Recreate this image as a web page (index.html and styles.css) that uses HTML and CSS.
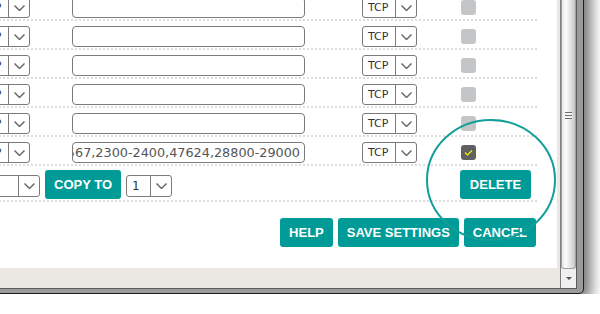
FILE: index.html
```html
<!DOCTYPE html>
<html lang="en">
<head>
    <meta charset="UTF-8">
    <meta name="viewport" content="width=device-width, initial-scale=1.0">
    <title>Port Forwarding</title>
    <link rel="stylesheet" href="styles.css">
</head>
<body>
    <div class="window">
        <div class="client">
            <div class="viewport">
                <div class="panel">
                    <div class="rule-list">
                        <div class="rule-row">
                            <div class="select sel-port"><span class="sel-value">TCP</span><span class="sel-arrow"><svg width="11" height="6" viewBox="0 0 11 6"><polyline points="0.5,0.5 5.5,5.5 10.5,0.5"/></svg></span></div>
                            <div class="text-field"></div>
                            <div class="select sel-proto"><span class="sel-value">TCP</span><span class="sel-arrow"><svg width="11" height="6" viewBox="0 0 11 6"><polyline points="0.5,0.5 5.5,5.5 10.5,0.5"/></svg></span></div>
                            <span class="check"></span>
                        </div>
                        <div class="rule-row">
                            <div class="select sel-port"><span class="sel-value">TCP</span><span class="sel-arrow"><svg width="11" height="6" viewBox="0 0 11 6"><polyline points="0.5,0.5 5.5,5.5 10.5,0.5"/></svg></span></div>
                            <div class="text-field"></div>
                            <div class="select sel-proto"><span class="sel-value">TCP</span><span class="sel-arrow"><svg width="11" height="6" viewBox="0 0 11 6"><polyline points="0.5,0.5 5.5,5.5 10.5,0.5"/></svg></span></div>
                            <span class="check"></span>
                        </div>
                        <div class="rule-row">
                            <div class="select sel-port"><span class="sel-value">TCP</span><span class="sel-arrow"><svg width="11" height="6" viewBox="0 0 11 6"><polyline points="0.5,0.5 5.5,5.5 10.5,0.5"/></svg></span></div>
                            <div class="text-field"></div>
                            <div class="select sel-proto"><span class="sel-value">TCP</span><span class="sel-arrow"><svg width="11" height="6" viewBox="0 0 11 6"><polyline points="0.5,0.5 5.5,5.5 10.5,0.5"/></svg></span></div>
                            <span class="check"></span>
                        </div>
                        <div class="rule-row">
                            <div class="select sel-port"><span class="sel-value">TCP</span><span class="sel-arrow"><svg width="11" height="6" viewBox="0 0 11 6"><polyline points="0.5,0.5 5.5,5.5 10.5,0.5"/></svg></span></div>
                            <div class="text-field"></div>
                            <div class="select sel-proto"><span class="sel-value">TCP</span><span class="sel-arrow"><svg width="11" height="6" viewBox="0 0 11 6"><polyline points="0.5,0.5 5.5,5.5 10.5,0.5"/></svg></span></div>
                            <span class="check"></span>
                        </div>
                        <div class="rule-row">
                            <div class="select sel-port"><span class="sel-value">TCP</span><span class="sel-arrow"><svg width="11" height="6" viewBox="0 0 11 6"><polyline points="0.5,0.5 5.5,5.5 10.5,0.5"/></svg></span></div>
                            <div class="text-field"></div>
                            <div class="select sel-proto"><span class="sel-value">TCP</span><span class="sel-arrow"><svg width="11" height="6" viewBox="0 0 11 6"><polyline points="0.5,0.5 5.5,5.5 10.5,0.5"/></svg></span></div>
                            <span class="check"></span>
                        </div>
                        <div class="rule-row">
                            <div class="select sel-port"><span class="sel-value">TCP</span><span class="sel-arrow"><svg width="11" height="6" viewBox="0 0 11 6"><polyline points="0.5,0.5 5.5,5.5 10.5,0.5"/></svg></span></div>
                            <div class="text-field"><span>4500-4567,2300-2400,47624,28800-29000</span></div>
                            <div class="select sel-proto"><span class="sel-value">TCP</span><span class="sel-arrow"><svg width="11" height="6" viewBox="0 0 11 6"><polyline points="0.5,0.5 5.5,5.5 10.5,0.5"/></svg></span></div>
                            <span class="check checked"><svg width="15" height="15" viewBox="0 0 15 15"><polyline points="4,7.5 6.5,10 11,5.5"/></svg></span>
                        </div>
                        <div class="copy-row">
                            <div class="select sel-from"><span class="sel-value"></span><span class="sel-arrow"><svg width="11" height="6" viewBox="0 0 11 6"><polyline points="0.5,0.5 5.5,5.5 10.5,0.5"/></svg></span></div>
                            <button class="btn btn-copy">COPY TO</button>
                            <div class="select sel-to"><span class="sel-value">1</span><span class="sel-arrow"><svg width="11" height="6" viewBox="0 0 11 6"><polyline points="0.5,0.5 5.5,5.5 10.5,0.5"/></svg></span></div>
                            <button class="btn btn-delete">DELETE</button>
                        </div>
                    </div>
                    <div class="actions">
                        <button class="btn">HELP</button>
                        <button class="btn">SAVE SETTINGS</button>
                        <button class="btn">CANCEL</button>
                    </div>
                </div>
                <div class="footer"></div>
            </div>
            <div class="scrollbar">
                <div class="thumb"><span class="grip"></span></div>
                <div class="arrow-down"></div>
            </div>
        </div>
    </div>

    <svg class="ring" width="600" height="314" viewBox="0 0 600 314">
        <ellipse cx="491" cy="180" rx="64" ry="60"/>
    </svg>
</body>
</html>
```

FILE: styles.css
```css
body {
    margin: 0;
    background: #fff;
    font-family: "DejaVu Sans", sans-serif;
    overflow: hidden;
}

.window {
    box-sizing: border-box;
    width: 614px;
    height: 314px;
    margin: -20px 0 0 -30px;
    padding: 0 6px 4px 0;
    background: #9b9b9b;
    border: 1px solid #1e1e1e;
    border-bottom-right-radius: 5px;
    box-shadow: 4px 4px 14px 3px rgba(0, 0, 0, 0.55);
}

.client {
    display: flex;
    height: 100%;
    background: #ebe8e4;
    border-right: 1px solid #5c5c5c;
    border-bottom: 1px solid #5c5c5c;
    box-sizing: border-box;
}

.viewport {
    flex: 1;
    display: flex;
    flex-direction: column;
}

.panel {
    flex: 1;
    background: #fff;
    margin-right: 3px;
    padding-top: 11px;
    padding-left: 4px;
}

.footer {
    height: 20px;
}

.rule-list {
    width: 562px;
}

.rule-row {
    display: flex;
    align-items: flex-start;
    height: 29px;
    padding-top: 5px;
    box-sizing: border-box;
    border-bottom: 2px dotted #dcdcdc;
}

.select {
    box-sizing: border-box;
    display: flex;
    height: 21px;
    border: 1px solid #7b7b7b;
    border-radius: 3px;
    background: #fff;
    color: #333;
}

.sel-value {
    flex: 1;
    padding-left: 5px;
    font-size: 11px;
    line-height: 19px;
    white-space: nowrap;
    overflow: hidden;
}

.sel-arrow {
    width: 20px;
    border-left: 1px solid #7b7b7b;
    display: flex;
    align-items: center;
    justify-content: center;
}

.sel-arrow svg polyline {
    fill: none;
    stroke: #6a6a6a;
    stroke-width: 1.5;
}

.sel-port,
.sel-proto {
    width: 55px;
}

.sel-proto {
    margin-left: 57px;
}

.text-field {
    box-sizing: border-box;
    width: 233px;
    height: 21px;
    margin-left: 42px;
    padding: 0 4px;
    border: 1px solid #7b7b7b;
    border-radius: 4px;
    display: flex;
    justify-content: flex-end;
    overflow: hidden;
    white-space: nowrap;
    font-size: 12.8px;
    line-height: 19px;
    color: #555;
}

.check {
    width: 15px;
    height: 15px;
    margin: 3px 0 0 44px;
    border-radius: 3px;
    background: #c3c5c7;
}

.check.checked {
    background: #606060;
}

.check svg polyline {
    fill: none;
    stroke: #ffee00;
    stroke-width: 1.2;
}

.copy-row {
    display: flex;
    align-items: flex-start;
    height: 36px;
    padding-top: 4px;
    box-sizing: border-box;
    border-bottom: 2px dotted #dcdcdc;
}

.copy-row .select {
    height: 22px;
    margin-top: 5px;
}

.sel-from {
    width: 65px;
}

.sel-to {
    width: 46px;
    margin-left: 5px;
}

.sel-to .sel-value {
    font-size: 12px;
    line-height: 20px;
}

.btn {
    height: 29px;
    padding: 0 9px;
    border: none;
    border-radius: 3px;
    background: #009b97;
    color: #fff;
    font-family: "Liberation Sans", Arial, sans-serif;
    font-weight: bold;
    font-size: 13px;
}

.btn-copy {
    margin-left: 5px;
}

.btn-delete {
    margin-left: auto;
    margin-right: 6px;
    width: 71px;
}

.actions {
    display: flex;
    justify-content: flex-end;
    gap: 5px;
    width: 561px;
    padding-top: 16px;
}

.scrollbar {
    width: 15px;
    border-left: 1px solid #7e7e7e;
    background: #f0f0f0;
    display: flex;
    flex-direction: column;
}

.thumb {
    flex: 1;
    display: flex;
    align-items: center;
    justify-content: center;
    padding-bottom: 19px;
    border: 1px solid #a0a0a0;
    border-top: none;
    border-radius: 0 0 3px 3px;
    background: linear-gradient(to right, #e6e6e6, #fbfbfb 30%, #dcdcdc 75%, #c4c4c4);
}

.grip {
    width: 7px;
    height: 7px;
    background: repeating-linear-gradient(to bottom, #6e6e6e 0, #6e6e6e 1px, #f4f4f4 1px, #f4f4f4 3px);
}

.arrow-down {
    height: 19px;
    display: flex;
    align-items: center;
    justify-content: center;
}

.arrow-down::after {
    content: "";
    border-left: 3px solid transparent;
    border-right: 3px solid transparent;
    border-top: 3px solid #555;
}

.ring {
    position: absolute;
    left: 0;
    top: 0;
    pointer-events: none;
}

.ring ellipse {
    fill: none;
    stroke: #129f9a;
    stroke-width: 2;
}
```
